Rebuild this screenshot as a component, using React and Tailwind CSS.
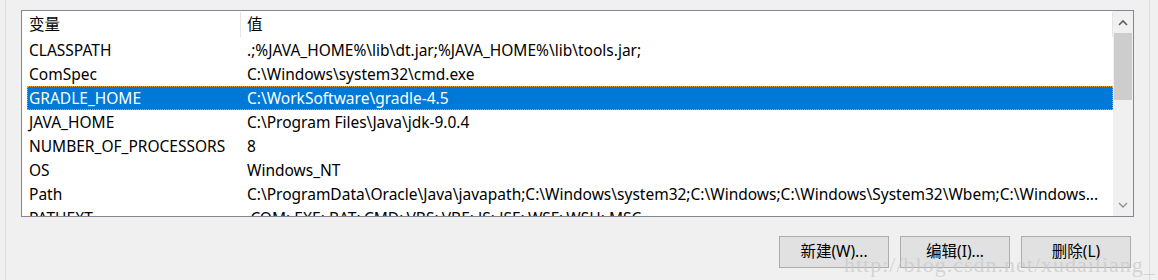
const rows = [
  ["CLASSPATH", ".;%JAVA_HOME%\\lib\\dt.jar;%JAVA_HOME%\\lib\\tools.jar;"],
  ["ComSpec", "C:\\Windows\\system32\\cmd.exe"],
  ["GRADLE_HOME", "C:\\WorkSoftware\\gradle-4.5", true],
  ["JAVA_HOME", "C:\\Program Files\\Java\\jdk-9.0.4"],
  ["NUMBER_OF_PROCESSORS", "8"],
  ["OS", "Windows_NT"],
  ["Path", "C:\\ProgramData\\Oracle\\Java\\javapath;C:\\Windows\\system32;C:\\Windows;C:\\Windows\\System32\\Wbem;C:\\Windows..."],
  ["PATHEXT", ".COM;.EXE;.BAT;.CMD;.VBS;.VBE;.JS;.JSE;.WSF;.WSH;.MSC"],
];

const font = { fontFamily: '"Noto Sans", "Noto Sans CJK SC", sans-serif' };

const Button = ({ children }) => (
  <div className="w-[110px] h-[32px] border border-[#adadad] bg-[#e1e1e1] flex items-center justify-center text-[15.5px] text-black">
    {children}
  </div>
);

const App = () => {
  return (
    <div className="w-[1158px] h-[280px] bg-[#f0f0f0] flex overflow-hidden" style={font}>
      <div className="w-[5px]" />
      <div className="w-px bg-[#dadada]" />
      <div className="w-[1143px] flex flex-col">
        <div className="h-[10px]" />
        <div className="ml-[15px] w-[1113px] h-[207px] border border-[#828790] bg-white flex overflow-hidden">
          <div className="flex-1 flex flex-col overflow-hidden">
            <div className="h-[27px] flex text-[15.5px] text-black shrink-0">
              <div className="w-[218px] pl-[7px] pt-[1px] flex items-center">变量</div>
              <div className="w-px my-[1px] bg-[#e5e5e5]" />
              <div className="flex-1 pl-[6px] pt-[1px] flex items-center">值</div>
              <div className="w-px my-[1px] bg-[#e5e5e5]" />
            </div>
            {rows.map(([name, value, selected]) => (
              <div
                key={name}
                className={`h-[24px] ml-[5px] pt-[1px] flex items-center text-[15.5px] whitespace-nowrap shrink-0 ${
                  selected
                    ? "bg-[#0078d7] text-white outline outline-1 outline-dotted outline-[#f0a040] -outline-offset-1"
                    : "text-black"
                }`}
              >
                <div className="w-[219px] pl-[2px]">{name}</div>
                <div className="flex-1 pl-[1px] overflow-hidden">{value}</div>
              </div>
            ))}
          </div>
          <div className="w-[20px] bg-[#f0f0f0] flex flex-col">
            <div className="h-[22px] flex items-center justify-center">
              <svg width="10" height="7" viewBox="0 0 10 7">
                <path d="M1 6 L5 2 L9 6" fill="none" stroke="#606060" strokeWidth="1.6" />
              </svg>
            </div>
            <div className="h-[67px] bg-[#cdcdcd] mx-[1px]" />
            <div className="flex-1" />
            <div className="h-[22px] flex items-center justify-center">
              <svg width="10" height="7" viewBox="0 0 10 7">
                <path d="M1 1 L5 5 L9 1" fill="none" stroke="#909090" strokeWidth="1.4" />
              </svg>
            </div>
          </div>
        </div>
        <div className="h-[19px]" />
        <div className="relative flex gap-[11px] pl-[773px]">
          <Button>新建(W)...</Button>
          <Button>编辑(I)...</Button>
          <Button>删除(L)</Button>
          <div
            className="absolute left-[838px] top-[12px] text-[22px] text-[#c8c8c8]/70 whitespace-nowrap pointer-events-none tracking-[1px]"
            style={{ fontFamily: '"Liberation Serif", serif' }}
          >
            http://blog.csdn.net/xudailiang_
          </div>
        </div>
      </div>
      <div className="w-px bg-[#dadada]" />
    </div>
  );
};

export default App;
